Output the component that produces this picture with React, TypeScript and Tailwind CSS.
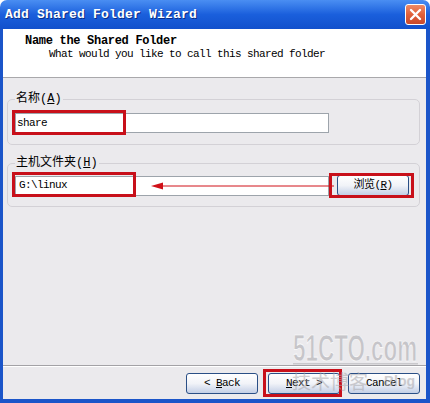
import * as React from 'react';

const mono = { fontFamily: '"Liberation Mono", "Noto Sans CJK SC", monospace' };

const XpButton: React.FC<{ className?: string; children: React.ReactNode }> = ({ className = '', children }) => (
  <div
    className={`relative h-[21px] w-[72px] flex items-center justify-center rounded-[3px] border border-[#2a4f86] bg-gradient-to-b from-[#ffffff] via-[#f1f3f8] to-[#c3cfe6] text-[11px] tracking-[-0.6px] text-black ${className}`}
  >
    {children}
  </div>
);

const RedBox: React.FC<{ className: string }> = ({ className }) => (
  <div className={`absolute border-[3px] border-[#c8101a] pointer-events-none ${className}`} />
);

// 51CTO blog watermark, drawn over the lower right corner
const Watermark: React.FC = () => (
  <svg className="absolute left-[288px] top-[325px] pointer-events-none select-none" width="138" height="71" viewBox="0 0 138 71">
    <text
      transform="translate(5,36) scale(1.02,1.65)"
      fontFamily='"Liberation Sans", sans-serif'
      fontWeight="bold"
      fontSize="22"
      fill="#c6c5c9"
      stroke="#ffffff"
      strokeWidth="0.4"
    >
      51CTO.com
    </text>
    <rect x="5" y="38" width="125" height="1.5" fill="#c9c8cc" />
    <text x="4" y="64" fontFamily='"Noto Sans CJK SC", sans-serif' fontSize="19" fill="#a9a8ac" opacity="0.55">
      技术博客
    </text>
    <text x="96" y="61" fontFamily='"Liberation Sans", sans-serif' fontWeight="bold" fontSize="14" fill="#a9a8ac" opacity="0.55">
      Blog
    </text>
  </svg>
);

const App: React.FC = () => {
  return (
    <div className="relative w-[430px] h-[403px] flex flex-col overflow-hidden bg-white" style={mono}>
      {/* title bar */}
      <div className="h-[29px] shrink-0 rounded-t-[7px] bg-gradient-to-b from-[#4a8ef2] via-[#1a5fdc] to-[#1150cc] flex items-center justify-between pl-[5px] pr-[4px]">
        <span className="text-white font-bold text-[13px] tracking-[0.2px] [text-shadow:1px_1px_#0b2f86]">
          Add Shared Folder Wizard
        </span>
        <div className="w-[21px] h-[21px] rounded-[3px] border border-white bg-gradient-to-b from-[#ee8a66] via-[#e0603a] to-[#c9492c] flex items-center justify-center">
          <svg width="13" height="13" viewBox="0 0 13 13">
            <path d="M2 2 L11 11 M11 2 L2 11" stroke="white" strokeWidth="2.4" strokeLinecap="round" />
          </svg>
        </div>
      </div>

      {/* client area */}
      <div className="flex-1 flex flex-col border-l-[3px] border-r-[4px] border-b-[4px] border-[#1b55c9]">
        <div className="h-[49px] shrink-0 bg-white border-b border-[#a9a8ab] pt-[6px] pl-[22px]">
          <div className="font-bold text-[12px] leading-[12px] tracking-[-0.3px] text-black">Name the Shared Folder</div>
          <div className="pl-[24px] pt-[1px] text-[11px] leading-[12px] tracking-[-0.6px] text-black">
            What would you like to call this shared folder
          </div>
        </div>

        <div className="flex-1 flex flex-col bg-[#ebeaed]">
          <fieldset className="mt-[14px] ml-[4px] mr-[6px] border border-[#d3d1d6] rounded-[5px] pl-[7px] pb-[11px]">
            <legend className="px-[1px] text-[12px] leading-[14px] text-black">
              名称(<span className="underline">A</span>)
            </legend>
            <div className="relative mt-[7px] w-[314px] h-[20px] border border-[#9da4ab] bg-white flex items-center pl-[1px] text-[11px] tracking-[-0.6px] text-black">
              share
              <RedBox className="-left-[4px] -top-[4px] w-[114px] h-[25px]" />
            </div>
          </fieldset>

          <fieldset className="mt-[11px] ml-[4px] mr-[6px] border border-[#d3d1d6] rounded-[5px] pl-[7px] pb-[10px]">
            <legend className="px-[1px] text-[12px] leading-[14px] text-black">
              主机文件夹(<span className="underline">H</span>)
            </legend>
            <div className="relative mt-[5px] flex items-center gap-[8px]">
              <div className="relative w-[314px] h-[20px] border border-[#9da4ab] bg-white flex items-center pl-[3px] text-[11px] tracking-[-0.6px] text-black">
                G:\linux
                <RedBox className="-left-[4px] -top-[5px] w-[124px] h-[25px]" />
              </div>
              <div className="relative">
                <XpButton>
                  浏览(<span className="underline">R</span>)
                </XpButton>
                <RedBox className="-left-[8px] -top-[2px] w-[85px] h-[25px]" />
              </div>
              <svg className="absolute left-[135px] top-[6px]" width="184" height="10" viewBox="0 0 184 10">
                <line x1="10" y1="5" x2="184" y2="5" stroke="#d01018" strokeWidth="1" />
                <path d="M1 5 L13 1.5 L13 8.5 Z" fill="#d01018" />
              </svg>
            </div>
          </fieldset>

          <div className="flex-1" />

          <div className="border-t border-[#a3a2a6]">
            <div className="h-[33px] border-t border-white flex items-start justify-end pt-[6px] pr-[6px]">
              <XpButton className="mr-[10px]">
                &lt; <span className="underline ml-[6px]">B</span>ack
              </XpButton>
              <div className="relative mr-[8px]">
                <XpButton>
                  <span className="underline">N</span>ext &gt;
                </XpButton>
                <RedBox className="-left-[5px] -top-[4px] w-[79px] h-[28px]" />
              </div>
              <XpButton>Cancel</XpButton>
            </div>
          </div>
        </div>
      </div>

      <Watermark />
    </div>
  );
};

export default App;
